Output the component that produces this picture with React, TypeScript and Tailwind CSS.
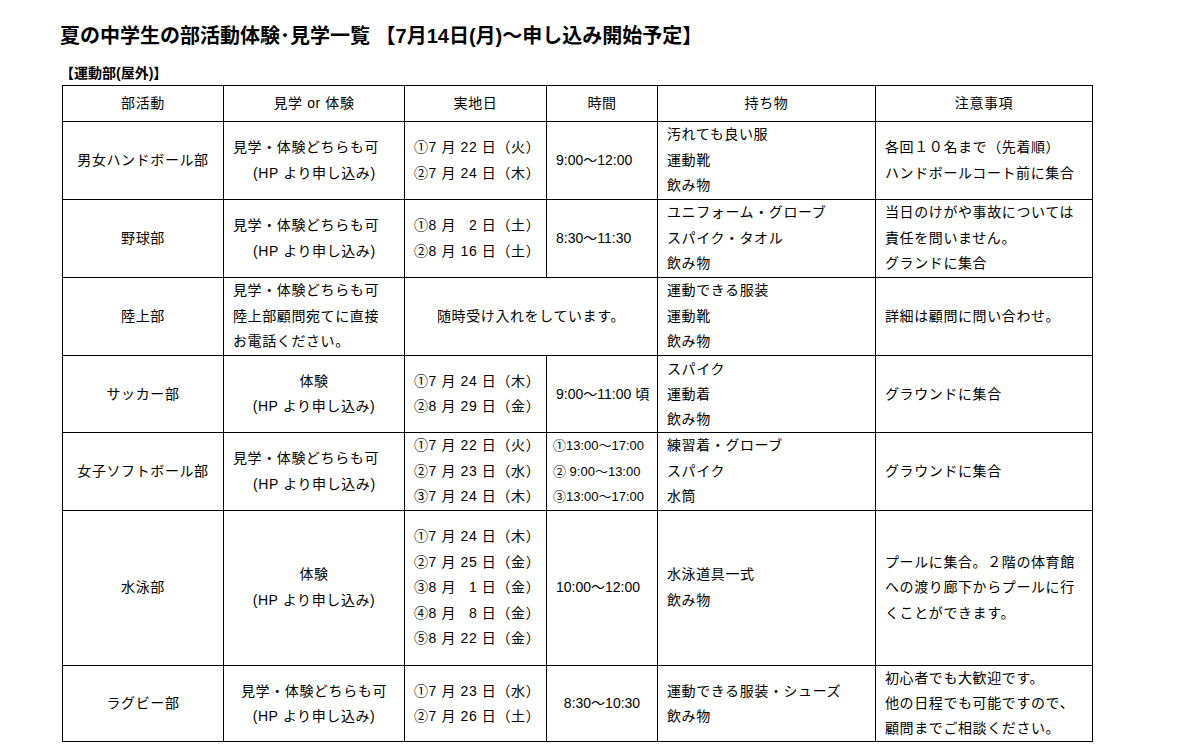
import React from "react";

type Row = {
  club: string;
  kind: string[];
  kindMode: "center" | "left" | "indent";
  dates?: string[];
  time?: string[];
  timeSmall?: boolean;
  timeCenter?: boolean;
  merged?: string;
  items: string[];
  notes: string[];
  h: string;
};

const rows: Row[] = [
  {
    club: "男女ハンドボール部",
    kind: ["見学・体験どちらも可", "(HP より申し込み)"],
    kindMode: "indent",
    dates: ["①7 月 22 日（火）", "②7 月 24 日（木）"],
    time: ["9:00～12:00"],
    items: ["汚れても良い服", "運動靴", "飲み物"],
    notes: ["各回１０名まで（先着順）", "ハンドボールコート前に集合"],
    h: "h-[78px]",
  },
  {
    club: "野球部",
    kind: ["見学・体験どちらも可", "(HP より申し込み)"],
    kindMode: "indent",
    dates: ["①8 月 \u20072 日（土）", "②8 月 16 日（土）"],
    time: ["8:30～11:30"],
    items: ["ユニフォーム・グローブ", "スパイク・タオル", "飲み物"],
    notes: ["当日のけがや事故については", "責任を問いません。", "グランドに集合"],
    h: "h-[78px]",
  },
  {
    club: "陸上部",
    kind: ["見学・体験どちらも可", "陸上部顧問宛てに直接", "お電話ください。"],
    kindMode: "left",
    merged: "随時受け入れをしています。",
    items: ["運動できる服装", "運動靴", "飲み物"],
    notes: ["詳細は顧問に問い合わせ。"],
    h: "h-[78px]",
  },
  {
    club: "サッカー部",
    kind: ["体験", "(HP より申し込み)"],
    kindMode: "center",
    dates: ["①7 月 24 日（木）", "②8 月 29 日（金）"],
    time: ["9:00～11:00 頃"],
    items: ["スパイク", "運動着", "飲み物"],
    notes: ["グラウンドに集合"],
    h: "h-[77px] leading-[25px]",
  },
  {
    club: "女子ソフトボール部",
    kind: ["見学・体験どちらも可", "(HP より申し込み)"],
    kindMode: "indent",
    dates: ["①7 月 22 日（火）", "②7 月 23 日（水）", "③7 月 24 日（木）"],
    time: ["①13:00～17:00", "② 9:00～13:00", "③13:00～17:00"],
    timeSmall: true,
    items: ["練習着・グローブ", "スパイク", "水筒"],
    notes: ["グラウンドに集合"],
    h: "h-[78px]",
  },
  {
    club: "水泳部",
    kind: ["体験", "(HP より申し込み)"],
    kindMode: "center",
    dates: [
      "①7 月 24 日（木）",
      "②7 月 25 日（金）",
      "③8 月 \u20071 日（金）",
      "④8 月 \u20078 日（金）",
      "⑤8 月 22 日（金）",
    ],
    time: ["10:00～12:00"],
    items: ["水泳道具一式", "飲み物"],
    notes: ["プールに集合。２階の体育館", "への渡り廊下からプールに行", "くことができます。"],
    h: "h-[155px]",
  },
  {
    club: "ラグビー部",
    kind: ["見学・体験どちらも可", "(HP より申し込み)"],
    kindMode: "center",
    dates: ["①7 月 23 日（水）", "②7 月 26 日（土）"],
    time: ["8:30～10:30"],
    timeCenter: true,
    items: ["運動できる服装・シューズ", "飲み物"],
    notes: ["初心者でも大歓迎です。", "他の日程でも可能ですので、", "顧問までご相談ください。"],
    h: "h-[76px] leading-[25px]",
  },
];

const cell = "border border-black align-middle p-0 px-[9px]";

function Lines({ lines, indent }: { lines: string[]; indent?: boolean }) {
  return (
    <>
      {lines.map((l, i) => (
        <div key={i} className={`whitespace-pre ${indent && i > 0 ? "pl-[20px]" : ""}`}>
          {l}
        </div>
      ))}
    </>
  );
}

export default function App() {
  return (
    <div
      className="min-h-screen bg-white text-black pl-[60px] pt-[21px]"
      style={{ fontFamily: '"Liberation Sans", "Noto Sans CJK JP", sans-serif' }}
    >
      <h1 className="text-[20px] leading-[30px] font-bold">
        夏の中学生の部活動体験･見学一覧 【7月14日(月)～申し込み開始予定】
      </h1>
      <p className="mt-[12px] text-[14px] leading-[20px] font-bold">【運動部(屋外)】</p>

      <table className="mt-[2px] ml-[2px] w-[1030px] table-fixed border-collapse text-[14px] leading-[25.6px] tracking-[0.6px]">
        <colgroup>
          <col className="w-[161px]" />
          <col className="w-[181px]" />
          <col className="w-[142px]" />
          <col className="w-[111px]" />
          <col className="w-[218px]" />
          <col className="w-[217px]" />
        </colgroup>
        <thead>
          <tr className="h-[36px]">
            <th className={`${cell} font-normal text-center`}>部活動</th>
            <th className={`${cell} font-normal text-center`}>見学 or 体験</th>
            <th className={`${cell} font-normal text-center`}>実地日</th>
            <th className={`${cell} font-normal text-center`}>時間</th>
            <th className={`${cell} font-normal text-center`}>持ち物</th>
            <th className={`${cell} font-normal text-center`}>注意事項</th>
          </tr>
        </thead>
        <tbody>
          {rows.map((r) => (
            <tr key={r.club} className={r.h}>
              <td className={`${cell} text-center`}>{r.club}</td>
              <td className={`${cell} ${r.kindMode === "center" ? "text-center" : "text-left"}`}>
                <Lines lines={r.kind} indent={r.kindMode === "indent"} />
              </td>
              {r.merged ? (
                <td colSpan={2} className={`${cell} text-center`}>
                  {r.merged}
                </td>
              ) : (
                <>
                  <td className={`${cell} text-left`}>
                    <Lines lines={r.dates ?? []} />
                  </td>
                  <td
                    className={`${cell} tracking-normal ${r.timeCenter ? "text-center" : "text-left"} ${
                      r.timeSmall ? "text-[13px] pl-[6px]" : ""
                    }`}
                  >
                    <Lines lines={r.time ?? []} />
                  </td>
                </>
              )}
              <td className={`${cell} text-left`}>
                <Lines lines={r.items} />
              </td>
              <td className={`${cell} text-left`}>
                <Lines lines={r.notes} />
              </td>
            </tr>
          ))}
        </tbody>
      </table>
    </div>
  );
}
